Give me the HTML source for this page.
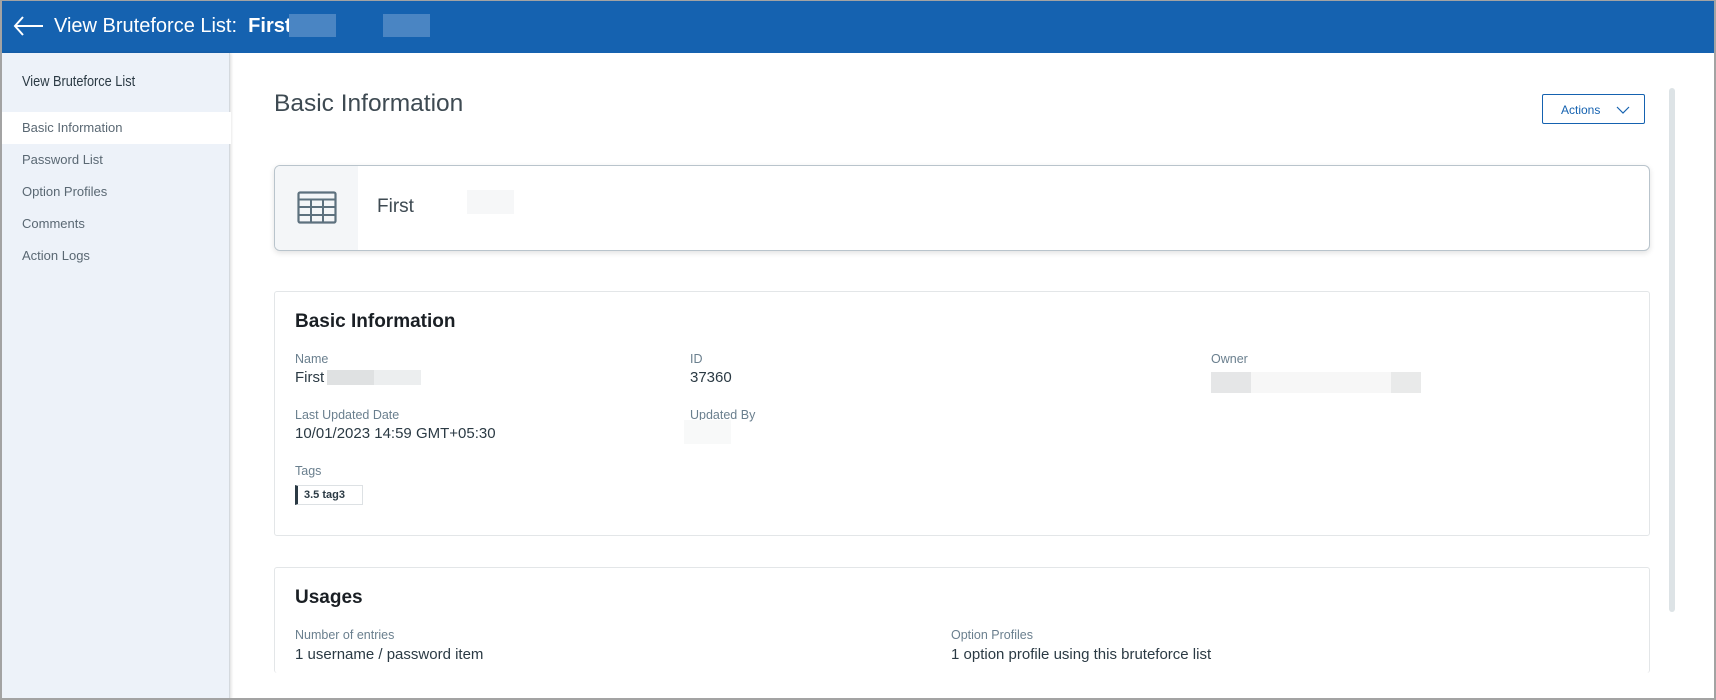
<!DOCTYPE html>
<html><head><meta charset="utf-8"><style>
*{box-sizing:border-box;margin:0;padding:0}
body{width:1716px;height:700px;overflow:hidden;background:#fff;font-family:"Liberation Sans",Roboto,sans-serif;position:relative;color:#2b3a44}
.frame{position:absolute;left:0;top:0;width:1716px;height:700px;border:2px solid #a3a3a3;border-top-width:1px;z-index:10;pointer-events:none}
.hdr{position:absolute;left:0;top:0;width:1716px;height:53px;background:#1562b0;color:#fff}
.hdr .t{position:absolute;left:54px;top:15px;font-size:20px;white-space:nowrap}
.blur{position:absolute;background:#4a85c3}
.side{position:absolute;left:0;top:53px;width:230px;height:647px;background:#edf2f9;border-right:1px solid #d4d9de;box-shadow:1px 0 3px rgba(0,0,0,.15)}
.side .ti{position:absolute;left:22px;top:20px;font-size:15px;color:#2b3a44;transform:scaleX(.85);transform-origin:left}
.side .it{position:absolute;left:22px;font-size:13px;color:#5a6873}
.side .act{position:absolute;left:0;top:59px;width:231px;height:32px;background:#fff}
.lbl{position:absolute;font-size:12.5px;color:#6a7f8e}
.val{position:absolute;font-size:15px;color:#2b3a44}
.panel{position:absolute;left:274px;width:1376px;border:1px solid #e3e6e8;border-radius:3px;background:#fff}
.h{position:absolute;font-size:19px;font-weight:bold;color:#1a1f24}
</style></head><body>
<div class="hdr">
<svg style="position:absolute;left:13px;top:15px" width="32" height="22" viewBox="0 0 32 22"><path d="M10 2 L2 11 L10 20 M2 11 H30" fill="none" stroke="#fff" stroke-width="2"/></svg>
<div class="t">View Bruteforce List:&nbsp; <b>First</b></div>
<div class="blur" style="left:289px;top:14px;width:47px;height:23px"></div>
<div class="blur" style="left:383px;top:14px;width:47px;height:23px"></div>
</div>
<div class="side">
<div class="ti">View Bruteforce List</div>
<div class="act"></div>
<div class="it" style="top:67px">Basic Information</div>
<div class="it" style="top:99px">Password List</div>
<div class="it" style="top:131px">Option Profiles</div>
<div class="it" style="top:163px">Comments</div>
<div class="it" style="top:195px">Action Logs</div>
</div>
<div style="position:absolute;left:274px;top:90px;font-size:24.5px;color:#3e4a52">Basic Information</div>
<div style="position:absolute;left:1542px;top:94px;width:103px;height:30px;border:1px solid #1562b0;border-radius:2px;color:#1562b0;font-size:12px;padding:8px 0 0 18px">Actions
<svg style="position:absolute;left:73px;top:11px" width="14" height="8" viewBox="0 0 14 8"><path d="M1 1 L7 7 L13 1" fill="none" stroke="#1562b0" stroke-width="1.2"/></svg></div>
<div style="position:absolute;left:1669px;top:88px;width:6px;height:524px;background:#dde3e6;border-radius:3px"></div>
<div style="position:absolute;left:274px;top:165px;width:1376px;height:86px;border:1px solid #b9c4cc;border-radius:6px;box-shadow:0 2px 6px rgba(0,0,0,.12);overflow:hidden;background:#fff">
<div style="position:absolute;left:0;top:0;width:83px;height:86px;background:#f4f6f8"></div>
<svg style="position:absolute;left:22px;top:25px" width="40" height="33" viewBox="0 0 40 33"><rect x="1.5" y="1.5" width="37" height="30" rx="1.5" fill="none" stroke="#5d717e" stroke-width="2.2"/><path d="M1.5 8.5H38.5M1.5 16H38.5M1.5 24H38.5M14 8.5V31.5M26 8.5V31.5" stroke="#5d717e" stroke-width="2"/></svg>
<div style="position:absolute;left:102px;top:30px;font-size:19px;color:#3e4a52">First</div>
<div style="position:absolute;left:192px;top:24px;width:47px;height:24px;background:#f6f7f8"></div>
</div>
<div class="panel" style="top:291px;height:245px"></div>
<div class="h" style="left:295px;top:311px">Basic Information</div>
<div class="lbl" style="left:295px;top:352px">Name</div>
<div class="val" style="left:295px;top:369px">First</div>
<div style="position:absolute;left:327px;top:370px;width:47px;height:15px;background:#dfe1e2"></div>
<div style="position:absolute;left:374px;top:370px;width:47px;height:15px;background:#eceeef"></div>
<div class="lbl" style="left:690px;top:352px">ID</div>
<div class="val" style="left:690px;top:369px">37360</div>
<div class="lbl" style="left:1211px;top:352px">Owner</div>
<div style="position:absolute;left:1211px;top:372px;width:40px;height:21px;background:#e5e6e7"></div>
<div style="position:absolute;left:1251px;top:372px;width:140px;height:21px;background:#f7f7f7"></div>
<div style="position:absolute;left:1391px;top:372px;width:30px;height:21px;background:#e9eaea"></div>
<div class="lbl" style="left:295px;top:408px">Last Updated Date</div>
<div class="val" style="left:295px;top:425px">10/01/2023 14:59 GMT+05:30</div>
<div class="lbl" style="left:690px;top:408px">Updated By</div>
<div style="position:absolute;left:684px;top:420px;width:47px;height:24px;background:#f8f9f9"></div>
<div class="lbl" style="left:295px;top:464px">Tags</div>
<div style="position:absolute;left:295px;top:485px;width:68px;height:20px;border:1px solid #dde1e4;border-left:3px solid #2b3a44;font-size:11px;font-weight:bold;color:#2b3a44;padding:3px 0 0 6px">3.5 tag3</div>
<div class="panel" style="top:567px;height:106px;border-bottom:none"></div>
<div class="h" style="left:295px;top:587px">Usages</div>
<div class="lbl" style="left:295px;top:628px">Number of entries</div>
<div class="val" style="left:295px;top:646px">1 username / password item</div>
<div class="lbl" style="left:951px;top:628px">Option Profiles</div>
<div class="val" style="left:951px;top:646px">1 option profile using this bruteforce list</div>
<div class="frame"></div>
</body></html>
